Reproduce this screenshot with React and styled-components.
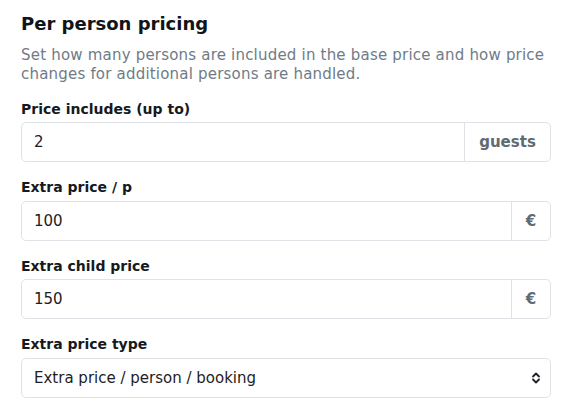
import React from "react";
import styled, { createGlobalStyle } from "styled-components";

const GlobalStyle = createGlobalStyle`
  body {
    margin: 0;
    background: #ffffff;
    font-family: "DejaVu Sans", "Noto Sans", sans-serif;
  }
`;

const Panel = styled.div`
  width: 530px;
  padding: 10px 17px 0 21px;
`;

const Title = styled.h2`
  margin: 0;
  font-size: 18px;
  line-height: 28px;
  font-weight: 700;
  color: #111418;
`;

const Description = styled.p`
  margin: 8px 0 0;
  font-size: 15px;
  line-height: 19px;
  color: #6f7b87;
  letter-spacing: 0.2px;
`;

const Field = styled.div`
  margin-top: ${(p) => (p.$first ? "14.5px" : "15px")};
`;

const Label = styled.label`
  display: block;
  font-size: 14px;
  line-height: 20px;
  font-weight: 600;
  color: #16191d;
  margin-bottom: 3.5px;
`;

const Group = styled.div`
  display: flex;
  height: 40px;
  border: 1px solid #dfe3e7;
  border-radius: 5px;
  box-sizing: border-box;
  background: #fff;
`;

const Input = styled.div`
  flex: 1;
  display: flex;
  align-items: center;
  padding: 0 12px;
  font-size: 15px;
  color: #1d2125;
`;

const Addon = styled.div`
  display: flex;
  align-items: center;
  justify-content: center;
  width: ${(p) => p.$width}px;
  border-left: 1px solid #dfe3e7;
  font-size: 15px;
  font-weight: 600;
  color: #5e6a74;
`;

const Chevron = styled.div`
  display: flex;
  align-items: center;
  padding-right: 9px;
  color: #1d2125;
`;

const fields = [
  { label: "Price includes (up to)", value: "2", addon: "guests", width: 85 },
  { label: "Extra price / p", value: "100", addon: "€", width: 38 },
  { label: "Extra child price", value: "150", addon: "€", width: 38 },
];

export default function App() {
  return (
    <>
      <GlobalStyle />
      <Panel>
        <Title>Per person pricing</Title>
        <Description>
          Set how many persons are included in the base price and how price
          changes for additional persons are handled.
        </Description>
        {fields.map((f, i) => (
          <Field key={f.label} $first={i === 0}>
            <Label>{f.label}</Label>
            <Group>
              <Input>{f.value}</Input>
              <Addon $width={f.width}>{f.addon}</Addon>
            </Group>
          </Field>
        ))}
        <Field>
          <Label>Extra price type</Label>
          <Group>
            <Input>Extra price / person / booking</Input>
            <Chevron>
              <svg width="10" height="14" viewBox="0 0 10 14" fill="none">
                <path d="M2 5.5L5 2.5L8 5.5" stroke="currentColor" strokeWidth="1.8" strokeLinecap="round" strokeLinejoin="round" />
                <path d="M2 8.5L5 11.5L8 8.5" stroke="currentColor" strokeWidth="1.8" strokeLinecap="round" strokeLinejoin="round" />
              </svg>
            </Chevron>
          </Group>
        </Field>
      </Panel>
    </>
  );
}
